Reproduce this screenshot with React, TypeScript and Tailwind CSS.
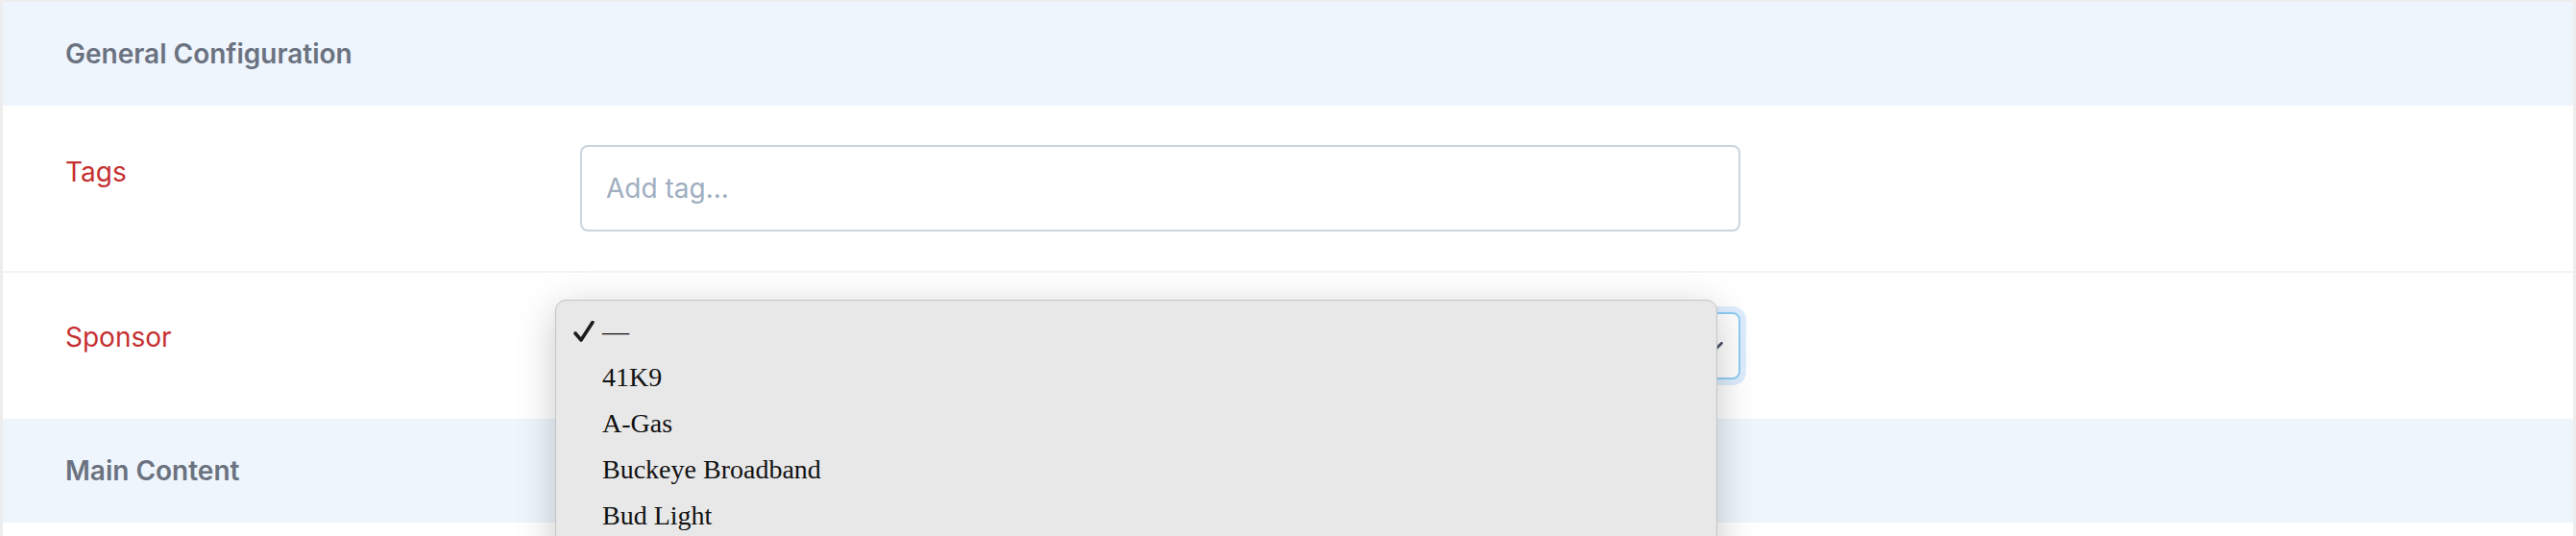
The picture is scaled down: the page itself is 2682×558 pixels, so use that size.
import { ChevronDown } from 'lucide-react'

const sponsors = ['—', '41K9', 'A-Gas', 'Buckeye Broadband', 'Bud Light']

function SectionHeader({ title }: { title: string }) {
  return (
    <div className="flex h-[108px] items-center bg-[#eef5fd] pl-[65px]">
      <h2 className="text-[28px] leading-[40px] font-semibold text-[#6b7280]">{title}</h2>
    </div>
  )
}

export default function App() {
  return (
    <div className="relative h-[558px] overflow-hidden bg-white font-['Inter',sans-serif]">
      <div className="border-t-2 border-x-[3px] border-[#ededed]">
        <SectionHeader title="General Configuration" />

        {/* Tags */}
        <div className="flex border-b-2 border-[#f3f3f3] py-[41px]">
          <label className="mt-[8px] w-[601px] pl-[65px] text-[28px] leading-[40px] text-[#c53030]">
            Tags
          </label>
          <input
            type="text"
            placeholder="Add tag..."
            className="h-[90px] w-[1208px] rounded-[8px] border-2 border-[#cbd5e0] px-[25px] text-[28px] outline-none placeholder:text-[#a0aec0]"
          />
        </div>

        {/* Sponsor */}
        <div className="flex py-[41px]">
          <label className="mt-[6px] w-[601px] pl-[65px] text-[28px] leading-[40px] text-[#c53030]">
            Sponsor
          </label>
          <div className="flex h-[70px] w-[1208px] items-center justify-end rounded-[8px] border-2 border-[#90cdf4] pr-[12px] shadow-[0_0_0_6px_rgba(147,197,253,0.3)]">
            <ChevronDown className="size-[22px] text-[#4a5568]" strokeWidth={3} />
          </div>
        </div>

        <SectionHeader title="Main Content" />
        <div className="h-[40px]" />
      </div>

      {/* native select popup */}
      <div className="absolute left-[578px] top-[312px] w-[1210px] h-[400px] rounded-[11px] border border-[#c4c4c4] bg-[#e8e8e8] pt-[8px] shadow-[0_10px_40px_rgba(0,0,0,0.22)] font-['Liberation_Serif',serif] text-[28px] leading-[48px] text-[#111]">
        {sponsors.map((name, i) => (
          <div key={name} className="relative flex items-center pl-[48px]">
            {i === 0 && (
              <svg
                className="absolute left-[18px] top-[13px]"
                width="22"
                height="22"
                viewBox="0 0 22 22"
                fill="none"
              >
                <path
                  d="M2 13 L8 20 L20 1.5"
                  stroke="#1d1d1d"
                  strokeWidth="3.6"
                  strokeLinecap="round"
                  strokeLinejoin="round"
                />
              </svg>
            )}
            <span>{name}</span>
          </div>
        ))}
      </div>
    </div>
  )
}
